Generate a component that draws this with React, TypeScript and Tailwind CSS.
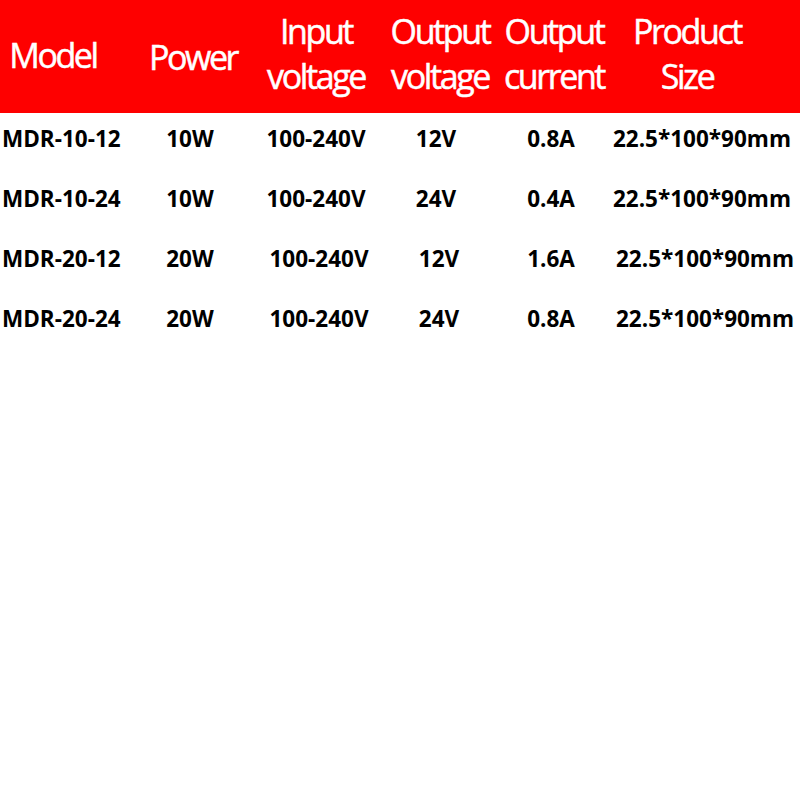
const headers = [
  { lines: ['Model'], cell: 'ml-[3px] w-[100px] pt-[24px]' },
  { lines: ['Power'], cell: 'ml-[30px] w-[120px] pt-[26px]' },
  { lines: ['Input', 'voltage'], cell: 'ml-[3px] w-[120px]' },
  { lines: ['Output', 'voltage'], cell: 'ml-[9px] w-[110px]' },
  { lines: ['Output', 'current'], cell: 'ml-[4px] w-[110px]' },
  { lines: ['Product', 'Size'], cell: 'ml-[23px] w-[110px]' },
];

const rows = [
  ['MDR-10-12', '10W', '100-240V', '12V', '0.8A', '22.5*100*90mm'],
  ['MDR-10-24', '10W', '100-240V', '24V', '0.4A', '22.5*100*90mm'],
  ['MDR-20-12', '20W', '100-240V', '12V', '1.6A', '22.5*100*90mm'],
  ['MDR-20-24', '20W', '100-240V', '24V', '0.8A', '22.5*100*90mm'],
];

export default function App() {
  return (
    <div className="h-[800px] w-[800px] bg-white font-['Open_Sans','Noto_Sans',sans-serif]">
      <div className="flex h-[113px] items-start bg-[#fe0000] pt-[9px] text-[34px] leading-[45px] tracking-[-2.4px] text-white [-webkit-text-stroke:0.5px_white]">
        {headers.map((h) => (
          <div key={h.lines.join(' ')} className={`flex flex-col items-center whitespace-nowrap ${h.cell}`}>
            {h.lines.map((line) => (
              <span key={line}>{line}</span>
            ))}
          </div>
        ))}
      </div>

      <div className="text-[22.5px] font-bold leading-[52px] text-black">
        {rows.map((row, i) => {
          const shift = i >= 2 ? 'pl-[6px]' : '';
          return (
            <div
              key={row[0]}
              className="grid h-[60px] grid-cols-[128px_124px_128px_112px_118px_184px] whitespace-nowrap"
            >
              <span className="pl-[2px]">{row[0]}</span>
              <span className="text-center">{row[1]}</span>
              <span className={`text-center ${shift}`}>{row[2]}</span>
              <span className={`text-center ${shift}`}>{row[3]}</span>
              <span className="text-center">{row[4]}</span>
              <span className={`text-center ${shift}`}>{row[5]}</span>
            </div>
          );
        })}
      </div>
    </div>
  );
}
